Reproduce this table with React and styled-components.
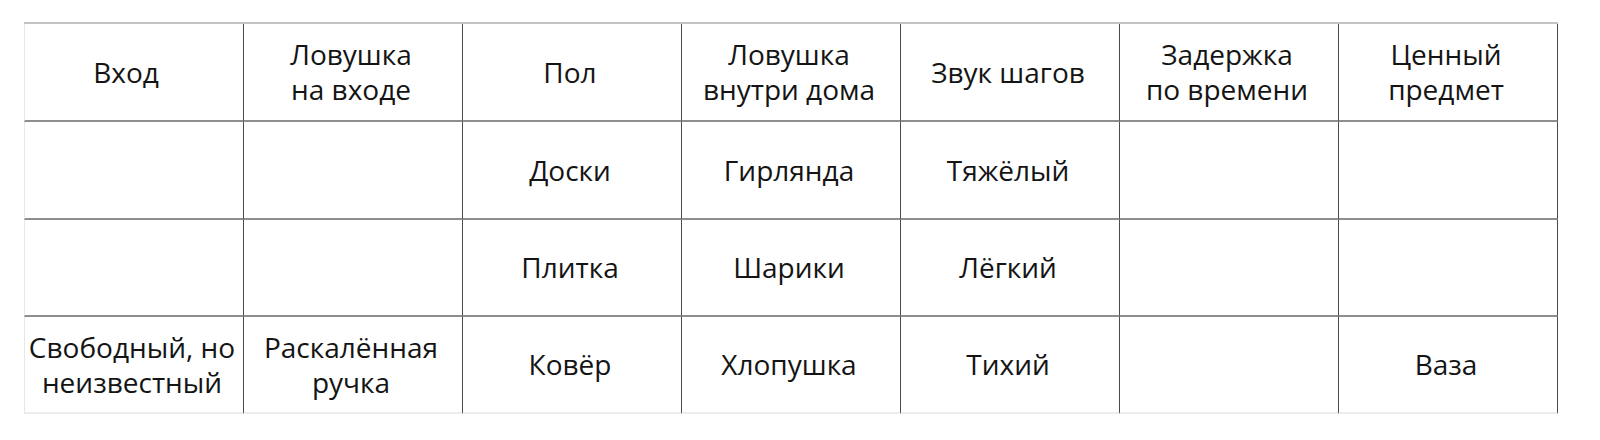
import React from "react";
import styled, { createGlobalStyle } from "styled-components";

const GlobalStyle = createGlobalStyle`
  body {
    margin: 0;
    background: #fff;
    font-family: "Open Sans", "Noto Sans", sans-serif;
  }
`;

const Page = styled.div`
  padding: 22px 0 0 24px;
`;

const Grid = styled.div`
  display: grid;
  grid-template-columns: 220px repeat(6, 219px);
  grid-template-rows: 98px 98px 97px 97px;
  width: 1534px;
  border-top: 2px solid #c4c4c4;
`;

const Cell = styled.div`
  box-sizing: border-box;
  display: flex;
  align-items: center;
  justify-content: center;
  text-align: center;
  color: #141414;
  font-size: 28px;
  line-height: 35px;
  padding-right: ${(p) => p.shift || 0}px;
  border-right: 1px solid #4a4a4a;
  border-bottom: 2px solid ${(p) => (p.last ? "#ececec" : "#8e8e8e")};
  border-left: ${(p) => (p.first ? "1px solid #e8e8e8" : "none")};
`;

const rows = [
  [
    "Вход",
    "Ловушка\nна входе",
    "Пол",
    "Ловушка\nвнутри дома",
    "Звук шагов",
    "Задержка\nпо времени",
    "Ценный\nпредмет",
  ],
  ["", "", "Доски", "Гирлянда", "Тяжёлый", "", ""],
  ["", "", "Плитка", "Шарики", "Лёгкий", "", ""],
  [
    "Свободный, но\nнеизвестный",
    "Раскалённая\nручка",
    "Ковёр",
    "Хлопушка",
    "Тихий",
    "",
    "Ваза",
  ],
];

function Text({ value }) {
  const lines = value.split("\n");
  return (
    <span>
      {lines.map((line, i) => (
        <React.Fragment key={i}>
          {i > 0 && <br />}
          {line}
        </React.Fragment>
      ))}
    </span>
  );
}

export default function App() {
  return (
    <Page>
      <GlobalStyle />
      <Grid>
        {rows.map((row, r) =>
          row.map((value, c) => (
            <Cell
              key={r + "-" + c}
              first={c === 0}
              last={r === rows.length - 1}
              shift={r === 0 && c === 0 ? 16 : 4}
            >
              {value && <Text value={value} />}
            </Cell>
          ))
        )}
      </Grid>
    </Page>
  );
}
